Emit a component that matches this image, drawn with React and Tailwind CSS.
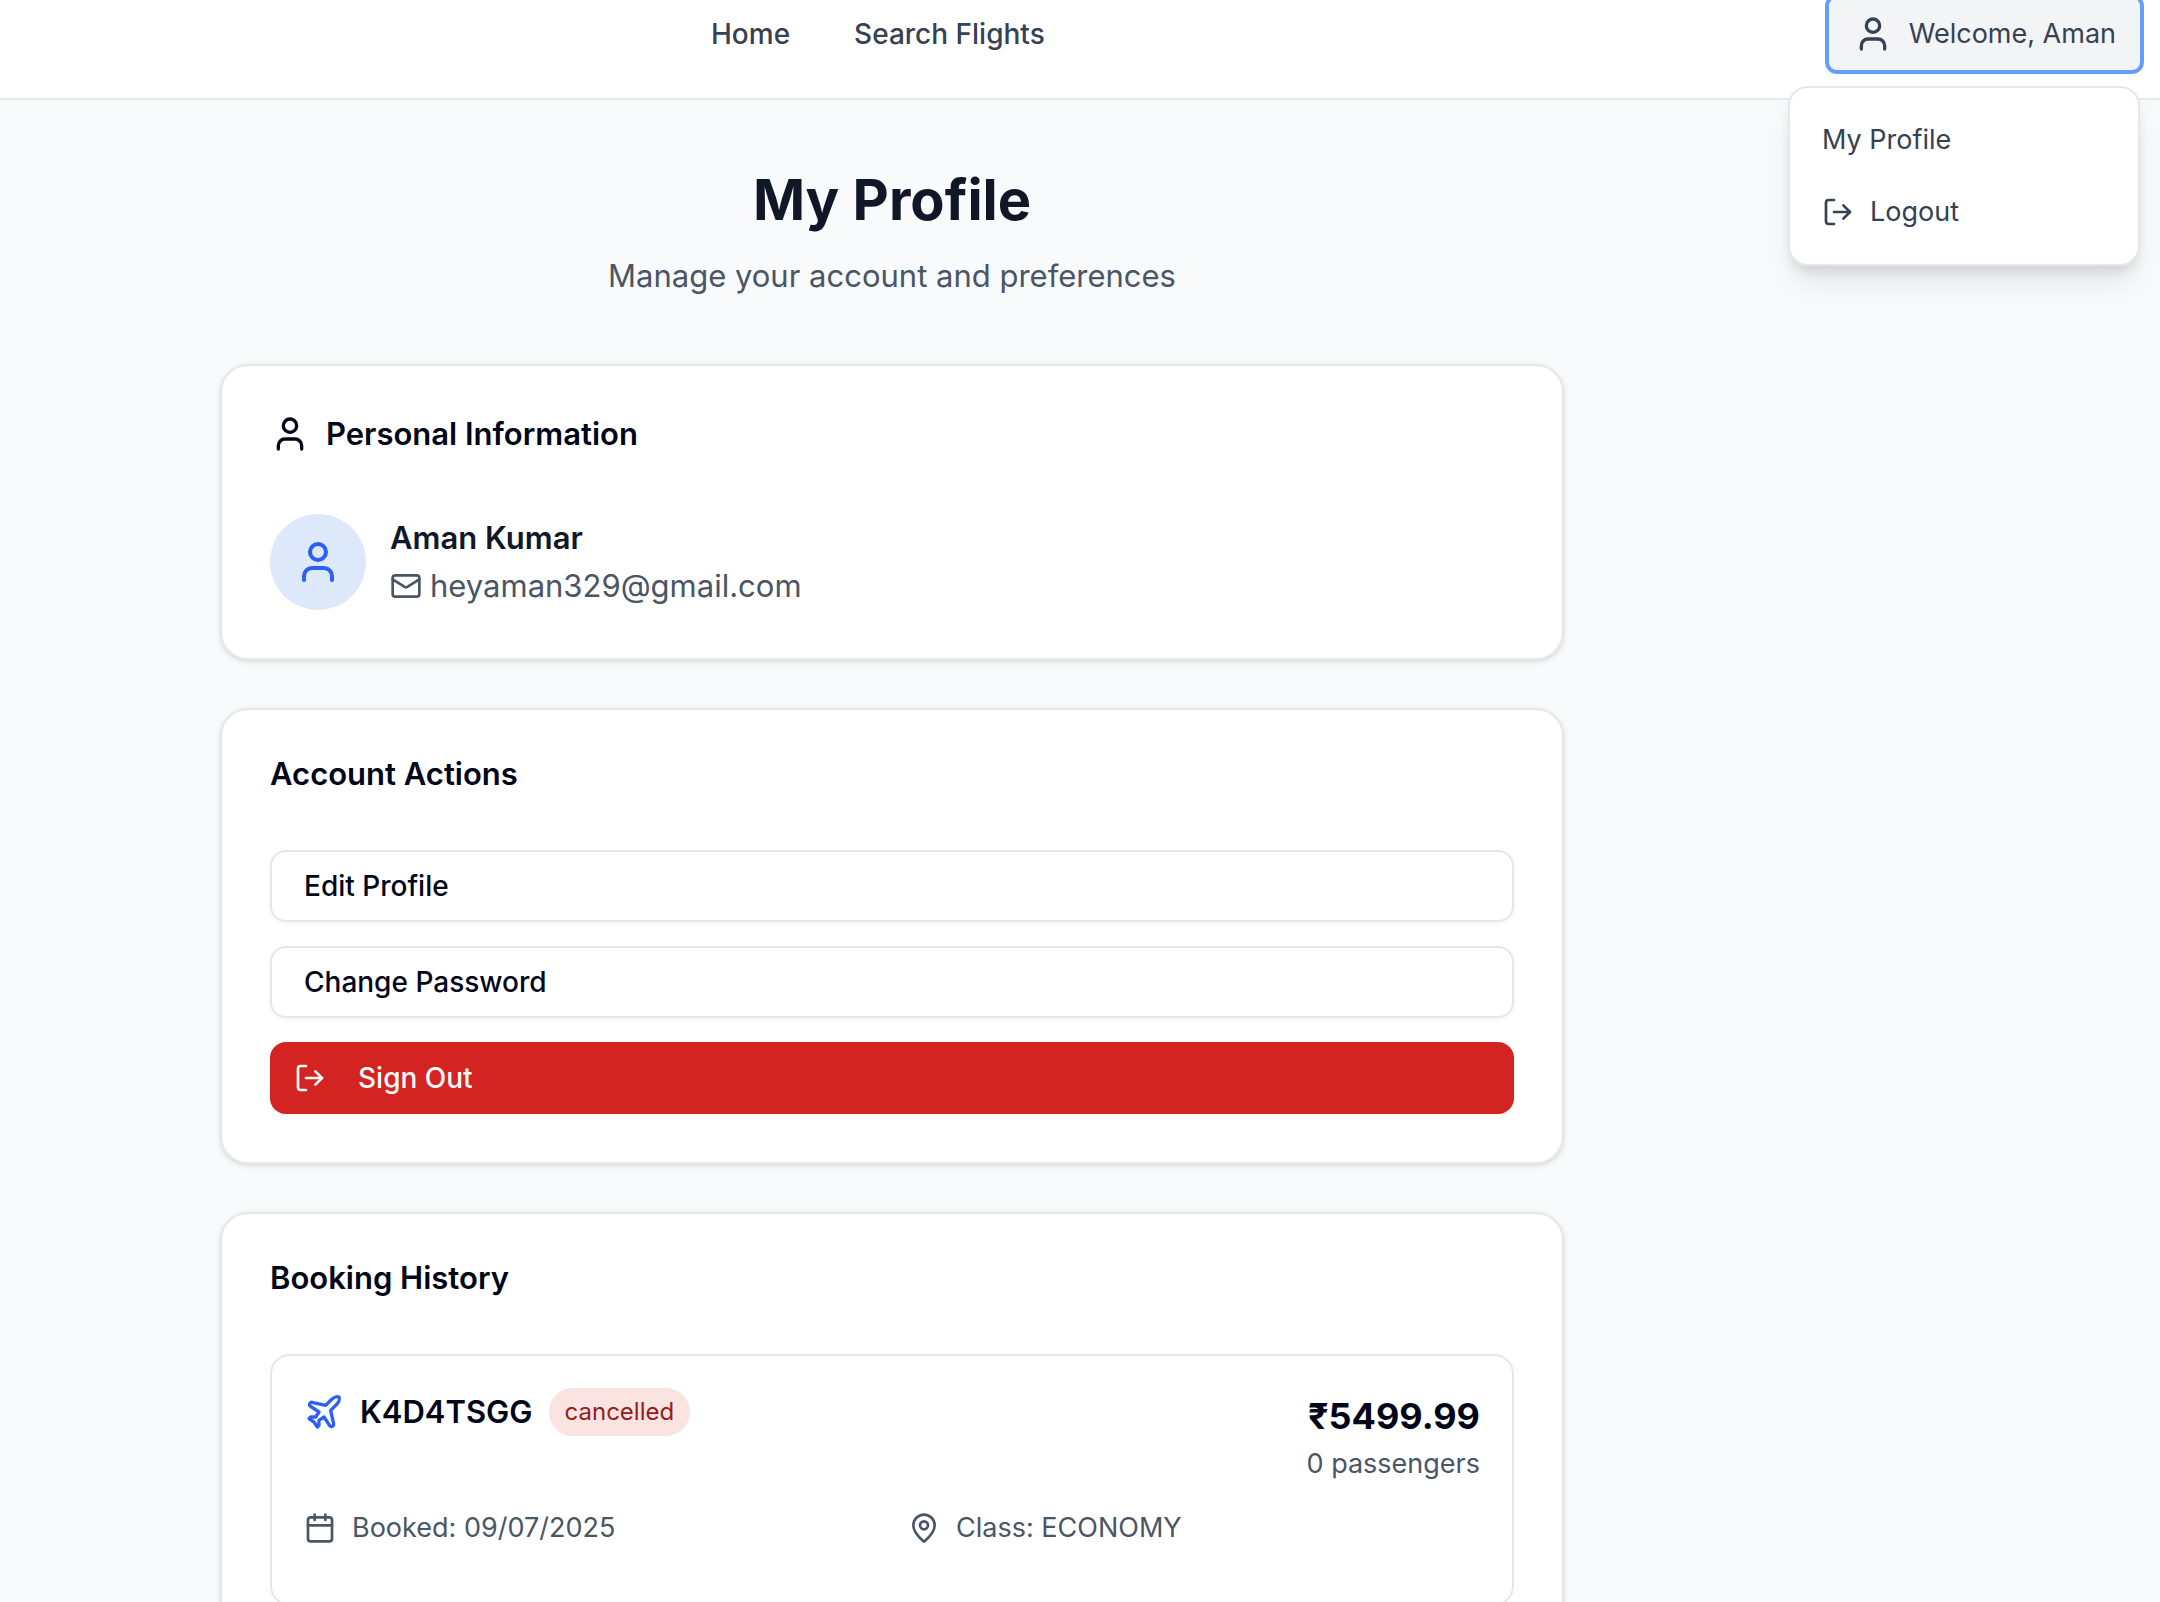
import React from "react";
import { Calendar, LogOut, Mail, MapPin, Plane, User } from "lucide-react";

function Card({ children }) {
  return (
    <section className="flex flex-col gap-[60px] rounded-[28px] border-2 border-[#e5e7eb] bg-white p-12 shadow-[0_2px_6px_rgba(0,0,0,0.1),0_2px_4px_-2px_rgba(0,0,0,0.1)]">
      {children}
    </section>
  );
}

function CardTitle({ children }) {
  return <h2 className="text-[31px] leading-8 font-semibold text-[#020618]">{children}</h2>;
}

function OutlineButton({ children }) {
  return (
    <button
      type="button"
      className="flex h-[72px] w-full items-center rounded-2xl border-2 border-[#e5e7eb] bg-white px-8 text-[28px] font-medium text-[#020618] shadow-[0_2px_4px_rgba(0,0,0,0.05)]"
    >
      {children}
    </button>
  );
}

function Header() {
  return (
    <header className="-mt-[30px] flex h-[130px] items-center justify-between border-b-2 border-[#e5e7eb] bg-white pr-5 pl-[711px]">
      <nav className="flex items-center gap-16 text-[28px] leading-10 font-medium text-[#364153]">
        <a href="#home">Home</a>
        <a href="#search">Search Flights</a>
      </nav>
      <div className="relative">
        <button
          type="button"
          aria-haspopup="menu"
          aria-expanded="true"
          className="flex h-[72px] items-center gap-4 rounded-lg bg-[#f3f4f6] px-6 text-[27px] text-[#364153] ring-4 ring-[#649fff]"
        >
          <User size={40} />
          Welcome, Aman
        </button>
        <div
          role="menu"
          className="absolute top-full right-0 z-10 mt-4 w-[352px] rounded-[20px] border-2 border-[#e5e7eb] bg-white py-4 text-[27px] leading-10 text-[#364153] shadow-[0_20px_30px_-6px_rgba(0,0,0,0.1),0_8px_12px_-4px_rgba(0,0,0,0.1)]"
        >
          <a role="menuitem" href="#profile" className="block px-8 py-4">
            My Profile
          </a>
          <button role="menuitem" type="button" className="flex w-full items-center gap-4 px-8 py-4">
            <LogOut size={32} />
            Logout
          </button>
        </div>
      </div>
    </header>
  );
}

function Booking() {
  return (
    <article className="rounded-[20px] border-2 border-[#e5e7eb] p-8 pb-14">
      <div className="mb-6 flex items-start justify-between">
        <div className="flex items-center gap-4">
          <Plane size={40} className="text-[#2c5ff6]" />
          <h3 className="text-[31px] leading-[48px] font-semibold text-[#020618]">K4D4TSGG</h3>
          <span className="rounded-full bg-[#fbe3e2] px-4 py-2 text-[24px] leading-8 text-[#93201c]">
            cancelled
          </span>
        </div>
        <div className="text-right">
          <p className="text-[36px] leading-[56px] font-bold text-[#020618]">₹5499.99</p>
          <p className="text-[27px] leading-10 text-[#4a5565]">0 passengers</p>
        </div>
      </div>
      <div className="grid grid-cols-2 gap-8 text-[27px] leading-10 text-[#4a5565]">
        <p className="flex items-center gap-4">
          <Calendar size={32} />
          Booked: 09/07/2025
        </p>
        <p className="flex items-center gap-4">
          <MapPin size={32} />
          Class: ECONOMY
        </p>
      </div>
    </article>
  );
}

export default function App() {
  return (
    <div className="h-screen overflow-hidden bg-[#f9fafc] font-['Inter','Liberation_Sans',sans-serif]">
      <Header />
      <main className="pt-16 pr-[596px] pl-[220px]">
        <div className="mb-16 text-center">
          <h1 className="text-[56px] leading-[72px] font-bold text-[#101828]">My Profile</h1>
          <p className="mt-4 text-[31px] leading-[48px] text-[#4a5565]">
            Manage your account and preferences
          </p>
        </div>
        <div className="flex flex-col gap-12">
          <Card>
            <div className="flex h-10 items-center gap-4 text-[#020618]">
              <User size={40} />
              <CardTitle>Personal Information</CardTitle>
            </div>
            <div className="flex items-center gap-6">
              <div className="flex size-24 items-center justify-center rounded-full bg-[#dde8fb] text-[#2c5ff6]">
                <User size={48} />
              </div>
              <div className="text-[31px] leading-[48px]">
                <h3 className="font-semibold text-[#101828]">Aman Kumar</h3>
                <p className="flex items-center gap-2 text-[#4a5565]">
                  <Mail size={32} />
                  heyaman329@gmail.com
                </p>
              </div>
            </div>
          </Card>
          <Card>
            <CardTitle>Account Actions</CardTitle>
            <div className="flex flex-col gap-6">
              <OutlineButton>Edit Profile</OutlineButton>
              <OutlineButton>Change Password</OutlineButton>
              <button
                type="button"
                className="flex h-[72px] w-full items-center gap-8 rounded-2xl bg-[#d32422] px-6 text-[28px] font-medium text-[#fafafa] shadow-[0_2px_4px_rgba(0,0,0,0.05)]"
              >
                <LogOut size={32} />
                Sign Out
              </button>
            </div>
          </Card>
          <Card>
            <CardTitle>Booking History</CardTitle>
            <Booking />
          </Card>
        </div>
      </main>
    </div>
  );
}
